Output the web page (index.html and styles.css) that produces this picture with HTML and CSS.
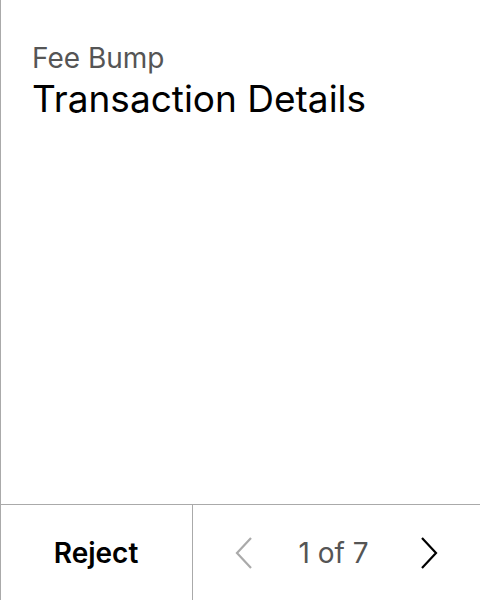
FILE: index.html
```html
<!DOCTYPE html>
<html>
<head>
<meta charset="utf-8">
<link rel="stylesheet" href="styles.css">
</head>
<body>
<div class="screen">
  <div class="content">
    <div class="subtitle">Fee Bump</div>
    <div class="title">Transaction Details</div>
  </div>
  <div class="footer">
    <div class="reject">Reject</div>
    <div class="pager">
      <svg class="chev" width="20" height="34" viewBox="0 0 20 34"><path d="M17 2 L3 17 L17 32" fill="none" stroke="#aaaaaa" stroke-width="2.2"/></svg>
      <span class="count">1 of 7</span>
      <svg class="chev" width="20" height="34" viewBox="0 0 20 34"><path d="M3 2 L17 17 L3 32" fill="none" stroke="#000" stroke-width="2.2"/></svg>
    </div>
  </div>
</div>
</body>
</html>
```
FILE: styles.css
```css
html, body { margin: 0; padding: 0; }
body { font-family: Inter, "Noto Sans", sans-serif; background: #fff; }
.screen {
  width: 480px; height: 600px; box-sizing: border-box;
  border-left: 1px solid #aaaaaa;
  display: flex; flex-direction: column;
}
.content { flex: 1; padding: 41px 0 0 31px; }
.subtitle { font-size: 28px; color: #555; line-height: 34px; }
.title { font-size: 37px; color: #000; line-height: 46px; margin-top: 1px; }
.footer {
  height: 96px; border-top: 1px solid #aaaaaa; box-sizing: border-box;
  display: flex;
}
.reject {
  width: 192px; border-right: 1px solid #aaaaaa; box-sizing: border-box;
  display: flex; align-items: center; justify-content: center;
  font-size: 28px; font-weight: 600; color: #000;
  padding-right: 1px;
}
.pager {
  flex: 1; display: flex; align-items: center; justify-content: space-between;
  padding: 0 41px 0 41px; box-sizing: border-box;
}
.count { font-size: 28px; color: #555; margin-right: 6px; }
.chev { display: block; }
```
